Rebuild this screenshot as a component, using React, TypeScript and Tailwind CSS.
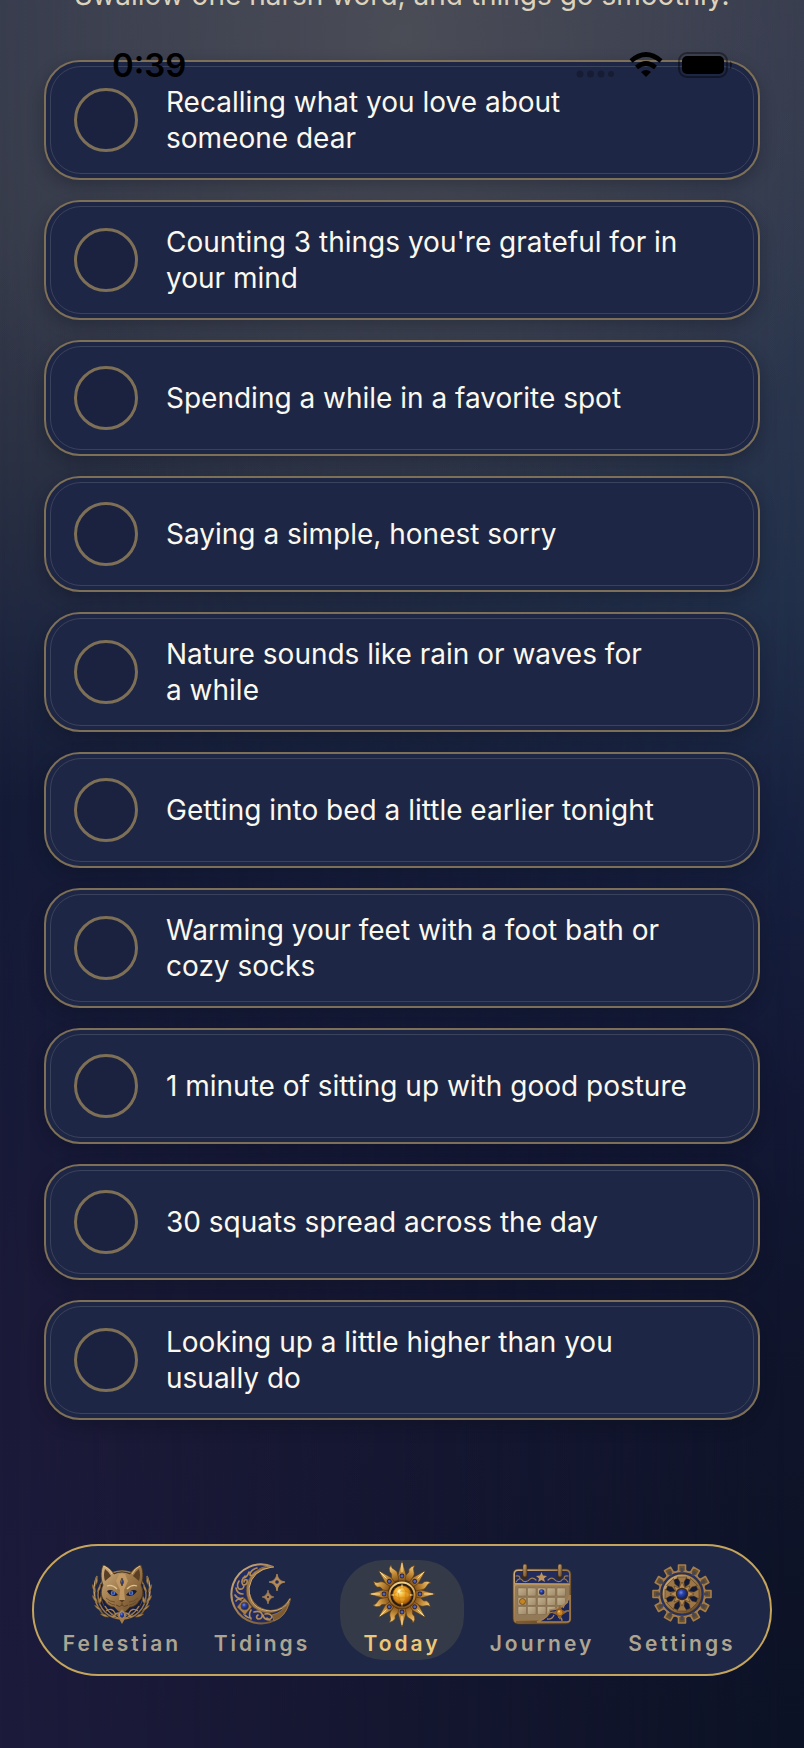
import clsx from "clsx";
import React, { useState } from "react";

const habits = [
  "Recalling what you love about someone\u00a0dear",
  "Counting 3 things you're grateful for in your mind",
  "Spending a while in a favorite spot",
  "Saying a simple, honest sorry",
  "Nature sounds like rain or waves for a\u00a0while",
  "Getting into bed a little earlier tonight",
  "Warming your feet with a foot bath or cozy socks",
  "1 minute of sitting up with good posture",
  "30 squats spread across the day",
  "Looking up a little higher than you usually do",
];

// Shared paints for all the tab icons
function IconPaints() {
  return (
    <svg width="0" height="0" className="absolute" aria-hidden="true">
      <defs>
        <linearGradient id="gold" x1="0" y1="0" x2="1" y2="1">
          <stop offset="0" stopColor="#d0b184" />
          <stop offset="0.5" stopColor="#9c7748" />
          <stop offset="1" stopColor="#64482a" />
        </linearGradient>
        <linearGradient id="brightGold" x1="0" y1="0" x2="0" y2="1">
          <stop offset="0" stopColor="#f3d286" />
          <stop offset="0.5" stopColor="#c8913c" />
          <stop offset="1" stopColor="#84521a" />
        </linearGradient>
        <linearGradient id="page" x1="0" y1="0" x2="1" y2="1">
          <stop offset="0" stopColor="#c4b290" />
          <stop offset="1" stopColor="#9f8a69" />
        </linearGradient>
        <radialGradient id="sapphire" cx="0.4" cy="0.35" r="0.7">
          <stop offset="0" stopColor="#7288e0" />
          <stop offset="0.35" stopColor="#2a43a8" />
          <stop offset="1" stopColor="#0f1850" />
        </radialGradient>
        <radialGradient id="amber" cx="0.4" cy="0.35" r="0.7">
          <stop offset="0" stopColor="#ffe98a" />
          <stop offset="0.45" stopColor="#eb9f1c" />
          <stop offset="1" stopColor="#9a4d06" />
        </radialGradient>
      </defs>
    </svg>
  );
}

function CatIcon() {
  const half = (
    <g>
      {/* laurel */}
      <path d="M5 12C0 24 1 42 14 53" fill="none" stroke="url(#gold)" strokeWidth="1.6" />
      <path
        d="M5 12q-3 4-1 9q3-4 1-9zM0 20q0 6 4 9q0-6-4-9zM0 31q1 6 6 8q-1-6-6-8zM2 41q3 5 8 6q-3-5-8-6zM8 50q4 4 9 3q-4-4-9-3zM9 20q-4 4-4 9q4-3 4-9zM9 32q-3 3-2 8q4-3 2-8z"
        fill="#b08a55"
        stroke="#4d3518"
        strokeWidth="0.4"
      />
      {/* collar */}
      <path
        d="M13 42q6 11 17 13M14 47q6-4 9 2q1 5-4 3M23 51q3-4 7 0"
        fill="none"
        stroke="#a98350"
        strokeWidth="1.3"
      />
    </g>
  );
  return (
    <svg viewBox="0 0 60 60" className="size-full overflow-visible" aria-hidden="true">
      <circle cx="30" cy="31" r="24" fill="#151d42" stroke="#9b7747" strokeWidth="1.4" />
      <circle cx="30" cy="31" r="21" fill="none" stroke="#6d532f" strokeWidth="0.8" />
      {half}
      <g transform="matrix(-1 0 0 1 60 0)">{half}</g>
      <path
        d="M11 1C8 9 9 16 11 21C8 28 9 34 13 37C15 41 19 43 22 43L27 48H33L38 43C41 43 45 41 47 37C51 34 52 28 49 21C51 16 52 9 49 1C45 2 40 6 38 10Q30 6 22 10C20 6 15 2 11 1Z"
        fill="url(#gold)"
        stroke="#4d3518"
        strokeWidth="0.8"
      />
      <path d="M13 5Q11 11 13 17L19 12Q17 8 13 5ZM47 5Q49 11 47 17L41 12Q43 8 47 5Z" fill="#5b3f24" />
      <path d="M12 2Q17 4 20 10M48 2Q43 4 40 10" fill="none" stroke="#e4c797" strokeWidth="0.9" />
      <path
        d="M27 10L24 17L28 26L27 36L30 39L33 36L32 26L36 17L33 10Q30 9 27 10Z"
        fill="#c59c66"
        opacity="0.85"
      />
      <path d="M15 22Q20 20 25 25M45 22Q40 20 35 25" fill="none" stroke="#e0c08d" strokeWidth="1.2" />
      <path d="M15 27Q20 24 26 31Q19 34 15 27ZM45 27Q40 24 34 31Q41 34 45 27Z" fill="#1b1c32" />
      <circle cx="21" cy="29" r="2.3" fill="#5476cf" />
      <circle cx="39" cy="29" r="2.3" fill="#5476cf" />
      <path d="M21 27.5v3M39 27.5v3" stroke="#0a1440" strokeWidth="0.9" />
      <path d="M27 36H33L30 39Z" fill="#5d3d20" />
      <path d="M30 39V41M24 41Q28 44 30 41Q32 44 36 41" fill="none" stroke="#5d3d20" strokeWidth="0.9" />
      <path d="M14 34Q18 38 23 38M46 34Q42 38 37 38M16 38Q20 41 23 41M44 38Q40 41 37 41" fill="none" stroke="#65472a" strokeWidth="0.8" />
      <path d="M30 14Q33 18 30 22Q27 18 30 14Z" fill="url(#sapphire)" stroke="#5d4220" strokeWidth="0.8" />
      <path d="M30 45L35 51L30 60L25 51Z" fill="#a37b47" />
      <ellipse cx="30" cy="51" rx="2.6" ry="3.2" fill="url(#sapphire)" stroke="#dcb980" strokeWidth="0.6" />
    </svg>
  );
}

function MoonIcon() {
  return (
    <svg viewBox="0 0 60 60" className="size-full overflow-visible" aria-hidden="true">
      <path
        d="M41 3A29.5 29.5 0 1 0 58 35A22 22 0 1 1 41 3Z"
        fill="#222c62"
        stroke="url(#gold)"
        strokeWidth="2"
        strokeLinejoin="round"
      />
      <path
        d="M40 3Q20 2 15 20Q12 34 21 43Q34 54 50 45Q56 41 58 35Q53 46 41 47A22 22 0 0 1 17 25Q18 8 40 3Z"
        fill="#a07a48"
        stroke="#5c4224"
        strokeWidth="0.6"
      />
      <path d="M40 3Q20 6 17 24Q17 46 39 47Q52 47 58 35" fill="none" stroke="#cfab76" strokeWidth="1" />
      <path
        d="M25 4q-7 2-7 7q3 2 5-2M17 8q-2 6-6 6M13 12q-5 5-2 9q5 0 4-5q-3-1-3 2M7 17q-3 5 0 8q5 1 5-4M4 24q1 6 7 6M3 31q3 5 8 3M4 37q2-3 5-1M19 46q-3 5 0 9M22 48q6-2 8 2q1 5-4 5q-3-2 0-4M31 51q1 5 7 5M33 50q6-1 7 3q-2 4-5 1M12 50q3 4 7 4"
        fill="none"
        stroke="#b08b57"
        strokeWidth="1.6"
        strokeLinecap="round"
      />
      <path d="M40 51Q50 49 57 38Q54 53 42 57Z" fill="#7d5a30" stroke="#b08b57" strokeWidth="0.6" />
      <path d="M12.5 34L16 38L20 43L16 47L13 51L9 47L5 43L9 38Z" fill="#a77e49" stroke="#5c4224" strokeWidth="0.5" />
      <circle cx="12.7" cy="42" r="3.8" fill="url(#sapphire)" stroke="#5d4220" strokeWidth="0.7" />
      <path d="M45 10Q46 17 53 18Q46 19 45 27Q44 19 37 18Q44 17 45 10Z" fill="#b48b58" stroke="#b48b58" strokeWidth="0.8" />
      <circle cx="45" cy="18" r="1.8" fill="#202a5c" />
      <path d="M36 26Q37 32 42 33Q37 34 36 40Q35 34 30 33Q35 32 36 26Z" fill="#a88056" stroke="#a88056" strokeWidth="0.6" />
      <circle cx="36" cy="33" r="1" fill="#2b2340" />
    </svg>
  );
}

function SunIcon() {
  const turns = [0, 45, 90, 135, 180, 225, 270, 315];
  return (
    <svg viewBox="0 0 66 66" className="size-full overflow-visible" aria-hidden="true">
      {turns.map((turn) => (
        <path
          key={turn}
          transform={`rotate(${turn + 22.5} 33 33)`}
          d="M29 19C27 14 33 12 30 8Q30 4 34 2Q33 5 35 7C39 12 35 14 37 19Z"
          fill="url(#brightGold)"
          stroke="#5b370e"
          strokeWidth="0.6"
        />
      ))}
      {turns.map((turn) => (
        <g key={turn} transform={`rotate(${turn} 33 33)`}>
          <path d="M30 20L29 14L33 0L37 14L36 20Z" fill="url(#brightGold)" stroke="#5b370e" strokeWidth="0.6" />
          <path d="M33 2V11" stroke="#ffe7a8" strokeWidth="0.8" />
          <circle cx="33" cy="15" r="2.4" fill="#2c2440" />
          <circle cx="33" cy="15" r="1.5" fill="#5265b0" />
        </g>
      ))}
      <circle cx="33" cy="34" r="14" fill="#241a16" stroke="#5b370e" strokeWidth="1" />
      <circle cx="33" cy="34" r="12.6" fill="none" stroke="url(#brightGold)" strokeWidth="2" />
      <circle cx="33" cy="34" r="9.5" fill="url(#amber)" stroke="#74410a" strokeWidth="0.7" />
      <path
        d="M33 25L29 30L24 34L30 37L33 43L37 37L42 34L37 30ZM29 30L37 30L37 37L30 37Z"
        fill="#ffd45a"
        fillOpacity="0.2"
        stroke="#c4720c"
        strokeOpacity="0.7"
        strokeWidth="0.6"
      />
      <path d="M33 22L34 26H32ZM33 46L34 42H32ZM21 34L25 33V35ZM45 34L41 33V35Z" fill="#e8bd68" />
      <path d="M28 31l2-3l2 1l-2 3z" fill="#fff3b8" />
    </svg>
  );
}

function CalendarIcon() {
  const columns = [6, 15.5, 25.5, 35, 45];
  const rows = [24, 33.5, 42.5];
  return (
    <svg viewBox="0 0 60 60" className="size-full overflow-visible" aria-hidden="true">
      <rect x="1" y="5" width="58" height="55" rx="5" fill="url(#gold)" stroke="#4d3518" strokeWidth="0.8" />
      <rect x="3" y="21" width="54" height="35" rx="2" fill="#927a58" />
      <path d="M6 7H54Q57 7 57 10V19H3V10Q3 7 6 7Z" fill="#222c5e" />
      <path d="M2 20.5H58" stroke="#b8945f" strokeWidth="1.3" />
      {rows.map((y) =>
        columns.map((x) => (
          <rect key={`${x}-${y}`} x={x} y={y} width="8.5" height="8" rx="1" fill="url(#page)" stroke="#6e583a" strokeWidth="0.4" />
        ))
      )}
      <path d="M4 58H40" stroke="#4f3a20" strokeWidth="0.8" />
      <path
        d="M4 18q4-6 7-1q4 2 7-2q3-2 6 1M56 18q-4-6-7-1q-4 2-7-2q-3-2-6 1M4 12q4-1 4 3M56 12q-4-1-4 3"
        fill="none"
        stroke="#9c7e52"
        strokeWidth="1.2"
        strokeLinecap="round"
      />
      <path d="M29.5 8L31 11.5L35 12L32 14.5L33 18L29.5 16L26 18L27 14.5L24 12L28 11.5Z" fill="#c0935a" />
      <circle cx="12.5" cy="12" r="3" fill="#3d2a16" />
      <circle cx="47.5" cy="12" r="3" fill="#3d2a16" />
      <rect x="11" y="0" width="4" height="13" rx="2" fill="url(#gold)" stroke="#3d2a16" strokeWidth="0.6" />
      <rect x="46" y="0" width="4" height="13" rx="2" fill="url(#gold)" stroke="#3d2a16" strokeWidth="0.6" />
      <circle cx="29.7" cy="28" r="2.7" fill="url(#sapphire)" />
      <circle cx="10.5" cy="37.5" r="3" fill="#c4841f" stroke="#6d4a1b" strokeWidth="0.8" />
      <path d="M58 31Q54 45 38 46Q37 54 25 58H55Q58 58 58 55Z" fill="#1c2558" stroke="#a5804f" strokeWidth="1.6" />
      <path
        d="M56 38Q52 40 51 44M35 55Q40 56 42 51M57 47Q53 46 50 50M50 57Q50 53 46 53M38 49Q42 47 44 50"
        fill="none"
        stroke="#a5804f"
        strokeWidth="1.3"
      />
      <path d="M48 41L50 46L55 48L50 51L48 56L45 51L40 49L45 46Z" fill="#8f6634" />
      <circle cx="47.7" cy="48.5" r="3.2" fill="#c9822a" stroke="#7a4a14" strokeWidth="0.7" />
      <circle cx="47" cy="47.5" r="1" fill="#f0c070" />
    </svg>
  );
}

function GearIcon() {
  const teeth = Array.from({ length: 12 }, (_, i) => i * 30);
  const spokes = Array.from({ length: 8 }, (_, i) => i * 45);
  return (
    <svg viewBox="0 0 60 60" className="size-full overflow-visible" aria-hidden="true">
      {teeth.map((turn) => (
        <path
          key={turn}
          transform={`rotate(${turn} 30 30)`}
          d="M24.500 8L26.500 6.500V1H33.500V6.500L35.500 8Z"
          fill="#67502f"
          stroke="#a57e4c"
          strokeWidth="1.6"
          strokeLinejoin="round"
        />
      ))}
      <circle cx="30" cy="30" r="22.7" fill="#243062" stroke="#a57e4c" strokeWidth="1.6" />
      {teeth.map((turn) => (
        <path key={turn} transform={`rotate(${turn} 30 30)`} d="M28.500 9V4H31.500V9Z" fill="#4a4650" />
      ))}
      <circle cx="30" cy="30" r="18" fill="#131a38" stroke="#4d3518" strokeWidth="4" />
      <circle cx="30" cy="30" r="18" fill="none" stroke="url(#gold)" strokeWidth="2.8" />
      {spokes.map((turn) => (
        <path
          key={turn}
          transform={`rotate(${turn} 30 30)`}
          d="M27 25L28 18L25 13H35L32 18L33 25Z"
          fill="#9c7647"
          stroke="#4d3518"
          strokeWidth="0.5"
        />
      ))}
      <path
        d="M30 18L33 24L38 22L36 27L42 30L36 33L38 38L33 36L30 42L27 36L22 38L24 33L18 30L24 27L22 22L27 24Z"
        fill="#b48b55"
        stroke="#4d3518"
        strokeWidth="0.5"
      />
      <circle cx="30" cy="30" r="6.2" fill="#3e2a16" />
      <circle cx="30" cy="30" r="5" fill="url(#sapphire)" />
    </svg>
  );
}

function StatusBar() {
  return (
    <div className="absolute inset-x-0 top-[45px] z-10 flex h-10 items-center justify-between pr-[70px] pl-28 text-black">
      <div className="text-[33px] leading-10 font-semibold">0:39</div>
      <div className="flex items-center gap-3.5">
        <svg width="38" height="26" viewBox="0 0 38 26" className="opacity-25" aria-hidden="true">
          <circle cx="4" cy="22" r="3.5" />
          <circle cx="14.5" cy="22" r="3.5" />
          <circle cx="25" cy="22" r="3.5" />
          <circle cx="35" cy="22" r="3" />
        </svg>
        <svg width="36" height="26" viewBox="-1 0 36 26" aria-label="Wi-Fi">
          <path d="M2 9Q17 -4 32 9" fill="none" stroke="black" strokeWidth="4.6" />
          <path d="M7.500 15.500Q17 7.500 26.500 15.500" fill="none" stroke="black" strokeWidth="4.6" />
          <path d="M12 20Q17 16 22 20L17 25Z" />
        </svg>
        <svg width="56" height="26" viewBox="0 0 56 26" aria-label="Battery">
          <rect x="1" y="1" width="48" height="24" rx="8" fill="none" stroke="black" strokeOpacity="0.4" strokeWidth="2" />
          <rect x="4" y="4" width="42" height="18" rx="5" />
          <path d="M52 9q2 1 2 4t-2 4z" opacity="0.45" />
        </svg>
      </div>
    </div>
  );
}

function HabitCard({ text }: { text: string }) {
  return (
    <label className="relative flex min-h-[116px] cursor-pointer items-center gap-7 rounded-[36px] border-2 border-[#7e7056] bg-[#1e2645] py-[22px] pr-16 pl-7 shadow-[0_6px_16px_rgba(10,12,25,0.3)]">
      <span className="pointer-events-none absolute inset-1 rounded-[31px] border border-[#3b425c]" />
      <input
        type="checkbox"
        className="size-16 shrink-0 appearance-none rounded-full border-[3px] border-[#7e7056] bg-[#1b2240] checked:bg-[#7e7056]"
      />
      <span className="text-[28px] leading-9 text-[#fbf8ee]">{text}</span>
    </label>
  );
}

const tabs = [
  { name: "Felestian", icon: <CatIcon /> },
  { name: "Tidings", icon: <MoonIcon /> },
  { name: "Today", icon: <SunIcon /> },
  { name: "Journey", icon: <CalendarIcon /> },
  { name: "Settings", icon: <GearIcon /> },
];

function TabBar() {
  const [current, setCurrent] = useState("Today");

  return (
    <nav className="mx-8 mt-auto mb-[72px] flex gap-4 rounded-[66px] border-2 border-[#c5a55c] bg-[#1e2745] px-[26px] py-3.5">
      {tabs.map((tab) => {
        const isActive = tab.name === current;
        return (
          <button
            key={tab.name}
            type="button"
            onClick={() => setCurrent(tab.name)}
            className={clsx(
              "flex flex-1 basis-0 flex-col items-center gap-2 rounded-[44px] py-1",
              isActive ? "bg-[#353a49] text-[#ecc878]" : "text-[#ada592]"
            )}
          >
            <span className={clsx("block", isActive ? "-m-[3px] size-[66px]" : "size-[60px]")}>{tab.icon}</span>
            <span className="text-[21px] leading-6 font-semibold tracking-[3px]">{tab.name}</span>
          </button>
        );
      })}
    </nav>
  );
}

export default function App() {
  return (
    <div className="relative isolate flex min-h-screen flex-col overflow-hidden bg-[linear-gradient(#353a4d_0%,#353a4a_14%,#2b3143_26%,#1f2740_36%,#141b36_46%,#181a38_64%,#1c1a39_78%,#1d1b3c_100%)] font-['Inter','Liberation_Sans',sans-serif]">
      <div className="absolute inset-0 -z-10 bg-[linear-gradient(#363b4e_0%,#2e384e_16%,#22304a_34%,#16203f_48%,#121733_64%,#0f142a_80%,#0c1225_100%)] [mask-image:linear-gradient(to_right,transparent,black)]" />
      <div className="absolute inset-0 -z-10 bg-[radial-gradient(ellipse_60%_32%_at_50%_2%,#4a4c56_0%,transparent_100%)]" />
      <IconPaints />
      <StatusBar />

      <header className="-mt-[26px] h-[86px] text-center text-[28px] leading-[42px] whitespace-nowrap text-[#ddd3bd]">
        Swallow one harsh word, and things go smoothly.
      </header>

      <main className="flex flex-col gap-5 px-11 pb-12">
        {habits.map((habit) => (
          <HabitCard key={habit} text={habit} />
        ))}
      </main>

      <TabBar />
    </div>
  );
}
